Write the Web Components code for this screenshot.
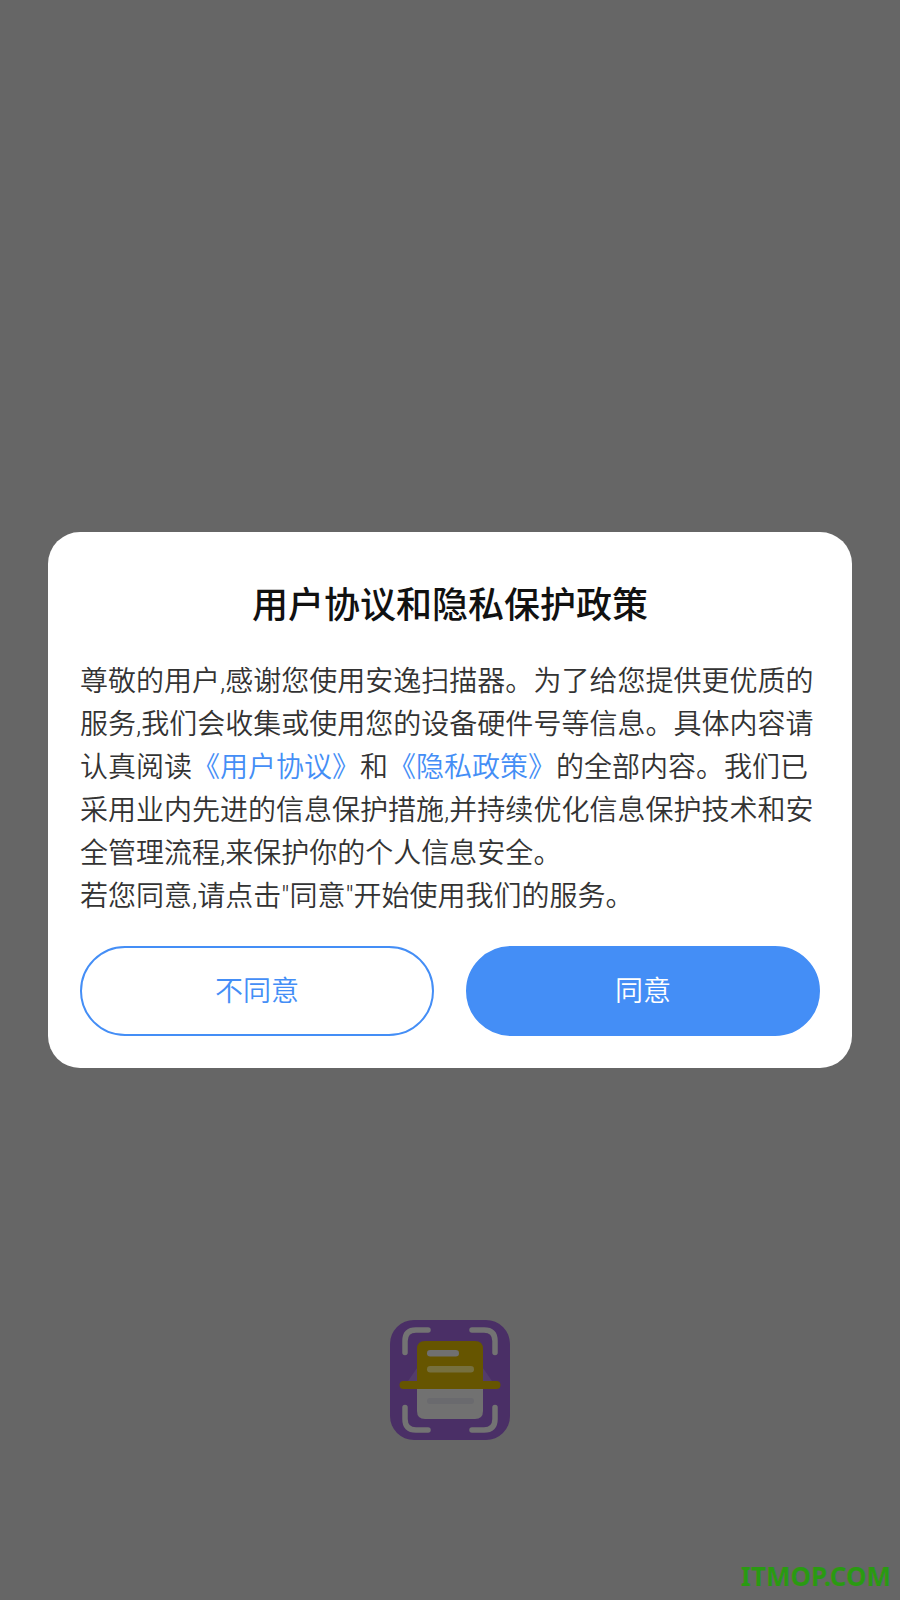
<!DOCTYPE html>
<html lang="zh-CN">
<head>
<meta charset="utf-8">
<title>用户协议和隐私保护政策</title>
<style>
  html, body { margin: 0; padding: 0; background: #666; }
  body { font-family: Roboto, "Noto Sans CJK SC", sans-serif; }
</style>
</head>
<body>
<splash-page>
  <app-logo></app-logo>
  <consent-dialog slot="overlay" heading="用户协议和隐私保护政策">
    尊敬的用户,感谢您使用安逸扫描器。为了给您提供更优质的服务,我们会收集或使用您的设备硬件号等信息。具体内容请认真阅读<a>《用户协议》</a>和<a>《隐私政策》</a>的全部内容。我们已采用业内先进的信息保护措施,并持续优化信息保护技术和安全管理流程,来保护你的个人信息安全。<br>若您同意,请点击"同意"开始使用我们的服务。
    <pill-button slot="actions" variant="outline">不同意</pill-button>
    <pill-button slot="actions" variant="solid">同意</pill-button>
  </consent-dialog>
  <span slot="watermark">ITMOP.COM</span>
</splash-page>

<script>
class SplashPage extends HTMLElement {
  constructor() {
    super();
    this.attachShadow({ mode: "open" });
    this.shadowRoot.innerHTML = `
      <style>
        :host {
          display: flex;
          flex-direction: column;
          align-items: center;
          position: relative;
          width: 900px;
          height: 1600px;
          box-sizing: border-box;
          padding-top: 1320px;
          background: #666;
          overflow: hidden;
        }
        .overlay {
          position: absolute;
          inset: 0;
          display: flex;
          align-items: center;
          justify-content: center;
        }
        .watermark {
          position: absolute;
          right: 9px;
          bottom: 5px;
          font: 700 26px/38px "Noto Sans", sans-serif;
          color: #2a9a12;
        }
      </style>
      <slot></slot>
      <div class="overlay"><slot name="overlay"></slot></div>
      <div class="watermark"><slot name="watermark"></slot></div>
    `;
  }
}

class AppLogo extends HTMLElement {
  constructor() {
    super();
    this.attachShadow({ mode: "open" });
    this.shadowRoot.innerHTML = `
      <style>
        :host { display: block; width: 120px; height: 120px; }
        svg { display: block; }
      </style>
      <svg width="120" height="120" viewBox="0 0 120 120" fill="none">
        <rect width="120" height="120" rx="24" fill="#4a2f66"/>
        <g stroke="#737373" stroke-width="5.500" stroke-linecap="round">
          <path d="M15 32.500V21q0-11 11-11H38"/>
          <path d="M82 10H94q11 0 11 11V32.500"/>
          <path d="M15 87.500V99q0 11 11 11H38"/>
          <path d="M82 110H94q11 0 11-11V87.500"/>
        </g>
        <path d="M27 61 L18 61 L27 48Z M93 61 L102 61 L93 48Z" fill="#533c6c"/>
        <path d="M27 65V29q0-8 8-8H85q8 0 8 8V65Z" fill="#665500"/>
        <path d="M27 65V91q0 8 8 8H85q8 0 8-8V65Z" fill="#717171"/>
        <rect x="37" y="30" width="32" height="6.500" rx="3.200" fill="#707070"/>
        <rect x="37" y="46" width="47" height="6.500" rx="3.200" fill="#76703f"/>
        <rect x="37" y="78" width="47" height="6" rx="3" fill="#6a6a6e"/>
        <rect x="9.500" y="61" width="101" height="8" rx="4" fill="#665500"/>
      </svg>
    `;
  }
}

class ConsentDialog extends HTMLElement {
  constructor() {
    super();
    this.attachShadow({ mode: "open" });
    this.shadowRoot.innerHTML = `
      <style>
        :host {
          display: flex;
          flex-direction: column;
          width: 804px;
          box-sizing: border-box;
          padding: 49px 32px 32px;
          background: #fff;
          border-radius: 32px;
        }
        h2 {
          margin: 0 0 29px;
          font-size: 36px;
          line-height: 50px;
          font-weight: 500;
          text-align: center;
          color: #111;
        }
        .body {
          font-size: 28px;
          font-weight: 350;
          line-height: 43px;
          color: #333;
        }
        ::slotted(a) { color: #448ef6; }
        .actions {
          display: flex;
          gap: 32px;
          margin-top: 28px;
        }
      </style>
      <h2></h2>
      <div class="body"><slot></slot></div>
      <div class="actions"><slot name="actions"></slot></div>
    `;
  }

  connectedCallback() {
    this.shadowRoot.querySelector("h2").textContent = this.getAttribute("heading");
  }
}

class PillButton extends HTMLElement {
  constructor() {
    super();
    this.attachShadow({ mode: "open" });
    this.shadowRoot.innerHTML = `
      <style>
        :host {
          flex: 1;
          display: flex;
          align-items: center;
          justify-content: center;
          height: 90px;
          box-sizing: border-box;
          padding-bottom: 4px;
          border-radius: 45px;
          border: 2px solid #448ef6;
          font-size: 28px;
          font-weight: 350;
          cursor: pointer;
        }
        :host([variant="outline"]) { background: #fff; color: #448ef6; }
        :host([variant="solid"]) { background: #448ef6; color: #fff; }
      </style>
      <slot></slot>
    `;
  }
}

customElements.define("splash-page", SplashPage);
customElements.define("app-logo", AppLogo);
customElements.define("consent-dialog", ConsentDialog);
customElements.define("pill-button", PillButton);
</script>
</body>
</html>
